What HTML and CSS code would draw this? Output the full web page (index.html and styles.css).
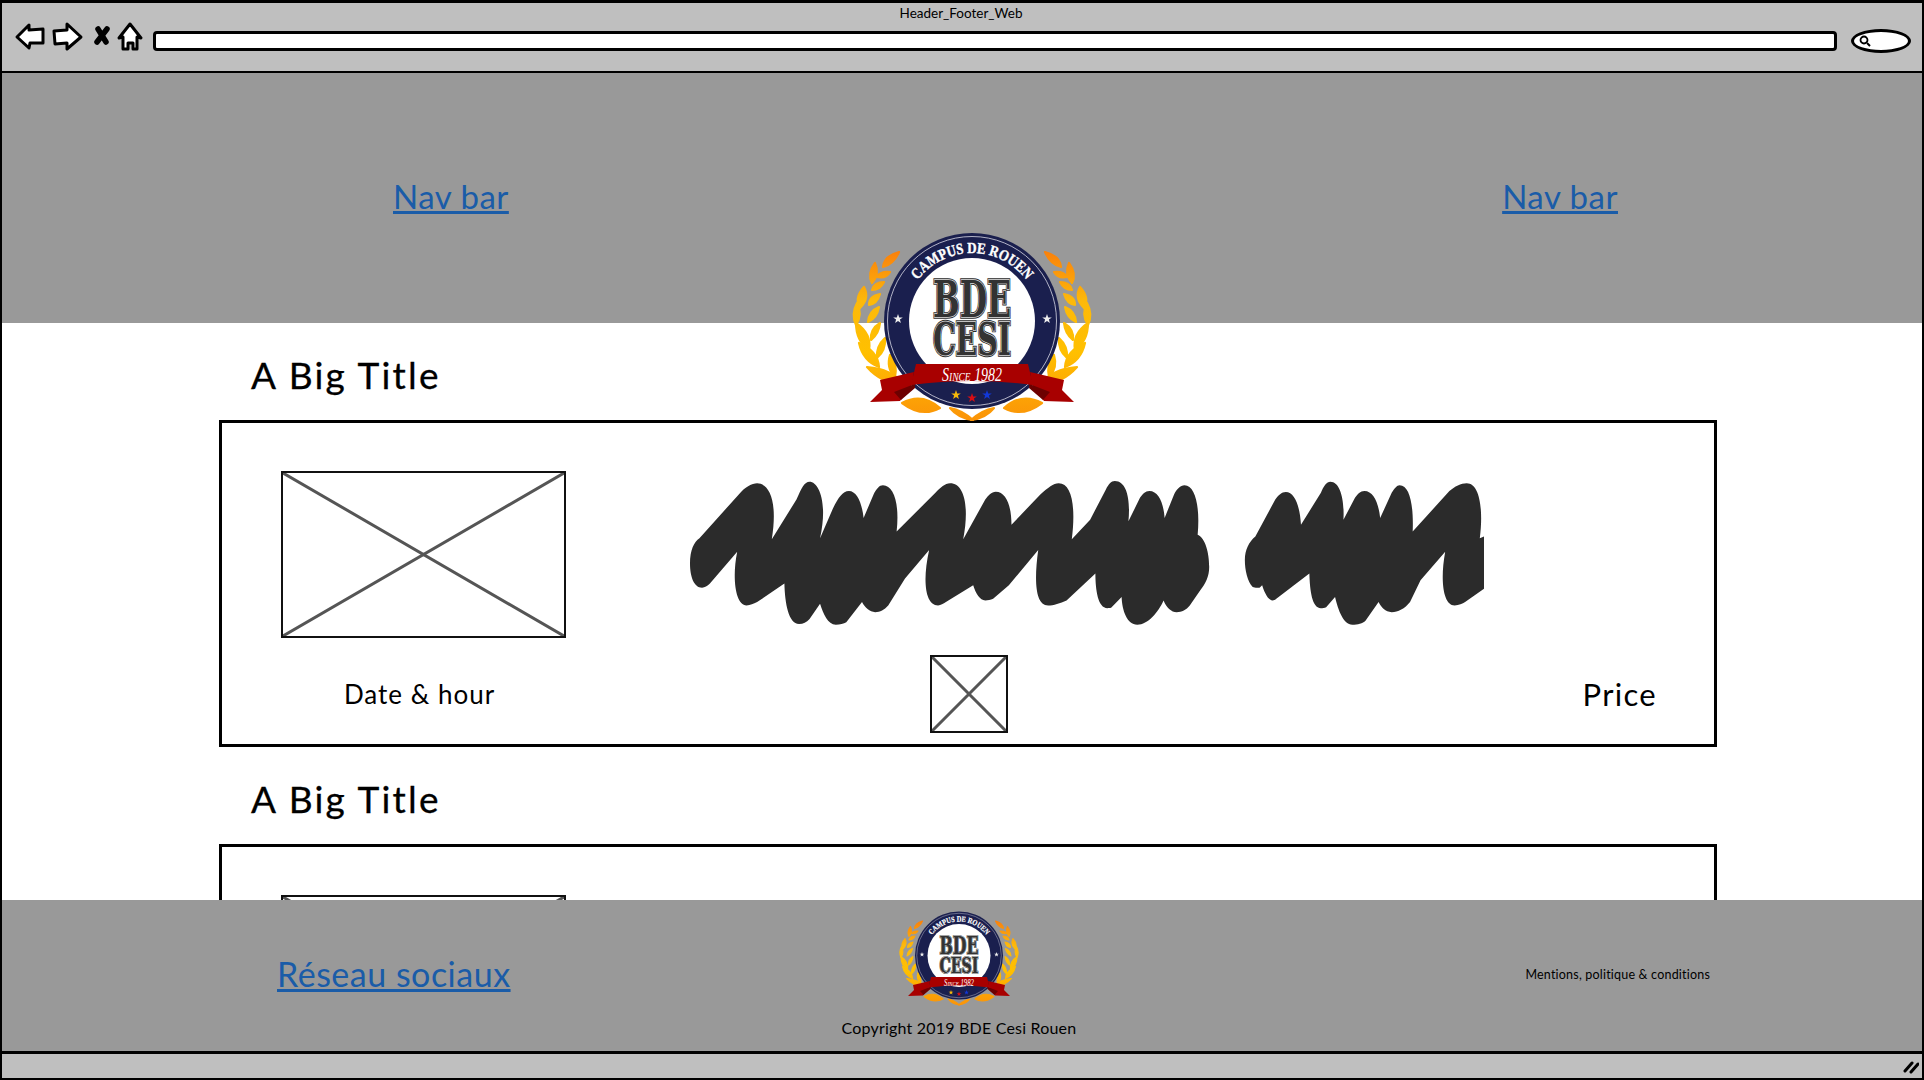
FILE: index.html
```html
<!DOCTYPE html>
<html lang="en">
<head>
<meta charset="UTF-8" />
<title>Header_Footer_Web</title>
<link rel="stylesheet" href="styles.css">
</head>
<body>

<!-- logo, used in header and footer -->
<svg class="defs" aria-hidden="true">
  <defs>
    <linearGradient id="gold" gradientUnits="userSpaceOnUse" x1="0" y1="30" x2="0" y2="200">
      <stop offset="0" stop-color="#f97f0c"/>
      <stop offset=".3" stop-color="#fdb90a"/>
      <stop offset=".6" stop-color="#ffc000"/>
      <stop offset="1" stop-color="#fb9408"/>
    </linearGradient>
    <path id="star" d="M0-5 1.2-1.6H4.8L1.9.6 2.9 4 0 2-2.9 4-1.9.6-4.8-1.6H-1.2Z"/>
    <path id="arc" d="M64 101A68 68 0 0 1 200 101"/>
    <g id="branch" fill="url(#gold)" stroke="url(#gold)" stroke-width="2.200" stroke-linejoin="round" transform="translate(2 0)">
      <path d="M57 32Q42 36 41 47 52 44 57 32Z"/>
      <path d="M33 43Q25 54 30 63 38 54 33 43Z"/>
      <path d="M48 52Q38 51 35 57 44 59 48 52Z"/>
      <path d="M42 62Q32 62 30 70 38 70 42 62Z"/>
      <path d="M22 67Q12 78 18 88 28 78 22 67Z"/>
      <path d="M38 74Q27 76 27 85 35 84 38 74Z"/>
      <path d="M37 87Q27 91 26 102 35 98 37 87Z"/>
      <path d="M15 83Q9 94 14 105 21 94 15 83Z"/>
      <path d="M14 103Q14 121 27 130 30 114 14 103Z"/>
      <path d="M38 103Q28 109 29 120 37 114 38 103Z"/>
      <path d="M43 118Q34 126 35 138 44 130 43 118Z"/>
      <path d="M17 123Q21 141 37 147 36 131 17 123Z"/>
      <path d="M48 135Q44 148 53 157 56 146 48 135Z"/>
      <path d="M25 147Q40 164 60 163 50 149 25 147Z"/>
      <path d="M60 183Q80 172 98 188 80 198 60 183Z"/>
      <path d="M108 188Q120 190 131 200 116 198 108 188Z"/>
    </g>
    <g id="tail">
      <path d="M40 160 74 152 72 165 60 181 30 182 42 170Z" fill="#a80000"/>
      <path d="M74 152 72 165 54 172 61 180 75 168Z" fill="#6d0000"/>
    </g>
    <symbol id="logo" viewBox="0 0 264 210">
      <use href="#branch"/>
      <g transform="matrix(-1 0 0 1 264 0)"><use href="#branch"/></g>
      <circle cx="132" cy="101" r="88" fill="#1a1f4e"/>
      <circle cx="132" cy="101" r="84.500" fill="none" stroke="#d8d8e4" stroke-width=".8"/>
      <circle cx="132" cy="101" r="63" fill="#fff"/>
      <text font-family="'Liberation Serif', serif" font-weight="700" font-size="15.500" fill="#fff" stroke="#fff" stroke-width=".4" text-anchor="middle" textLength="126" lengthAdjust="spacingAndGlyphs"><textPath href="#arc" startOffset="50%">CAMPUS DE ROUEN</textPath></text>
      <g font-family="'DejaVu Serif', serif" font-weight="700" text-anchor="middle">
        <text x="132" y="97" font-size="50" textLength="78" lengthAdjust="spacingAndGlyphs" fill="none" stroke="#2b2b2b" stroke-width="3.400">BDE</text>
        <text x="132" y="97" font-size="50" textLength="78" lengthAdjust="spacingAndGlyphs" fill="none" stroke="#ddd" stroke-width="1.600">BDE</text>
        <text x="132" y="97" font-size="50" textLength="78" lengthAdjust="spacingAndGlyphs" fill="#333">BDE</text>
        <text x="132" y="135" font-size="45" textLength="78" lengthAdjust="spacingAndGlyphs" fill="none" stroke="#2b2b2b" stroke-width="3.400">CESI</text>
        <text x="132" y="135" font-size="45" textLength="78" lengthAdjust="spacingAndGlyphs" fill="none" stroke="#ddd" stroke-width="1.600">CESI</text>
        <text x="132" y="135" font-size="45" textLength="78" lengthAdjust="spacingAndGlyphs" fill="#333">CESI</text>
      </g>
      <use href="#star" transform="translate(58 99)" fill="#eee"/>
      <use href="#star" transform="translate(207 99)" fill="#eee"/>
      <use href="#tail"/>
      <use href="#tail" transform="matrix(-1 0 0 1 264 0)"/>
      <path d="M76 144H188L193 165Q132 157 71 165Z" fill="#a80000"/>
      <text x="132" y="161" font-family="'Liberation Serif', serif" font-style="italic" font-variant="small-caps" font-size="19" fill="#fff" text-anchor="middle" textLength="60" lengthAdjust="spacingAndGlyphs">Since 1982</text>
      <use href="#star" transform="translate(116 175)" fill="#f5b90a"/>
      <use href="#star" transform="translate(132 178)" fill="#d80e14"/>
      <use href="#star" transform="translate(147 175)" fill="#1238d8"/>
    </symbol>
    <symbol id="cross" viewBox="0 0 100 100" preserveAspectRatio="none">
      <path d="M0 0 100 100M100 0 0 100" stroke="#555" stroke-width="3" vector-effect="non-scaling-stroke" fill="none"/>
    </symbol>
    <symbol id="scribble" viewBox="22 35 1514 428" preserveAspectRatio="none">
      <path fill="#2b2b2b" d="M22 280C22 240 30 215 40 205L115 75C128 52 140 42 150 42 172 42 190 90 178 208L225 90C235 55 240 37 250 37 268 37 285 100 270 205L295 115C305 85 313 65 325 65 340 65 350 100 353 145L372 75C378 58 383 48 390 48 410 48 422 100 416 185L490 70C500 55 508 42 518 42 545 42 555 110 543 208L585 90C590 80 597 67 605 67 625 67 635 110 635 165L690 75C705 55 715 42 725 42 750 42 758 110 750 208L785 150 815 60C820 45 825 35 832 35 855 35 862 90 858 155L880 85C885 75 890 65 898 65 915 65 925 100 927 145L945 75C950 60 957 48 965 48 985 48 995 110 990 195 1005 205 1012 250 1012 290 1012 320 1005 340 995 360L975 405C968 418 960 425 950 425 940 425 930 410 925 390 915 425 895 462 875 462 855 462 846 420 845 380L825 412C822 413 820 413 818 413 800 413 795 360 795 310L740 390C728 398 715 405 705 405 680 405 678 330 686 240L630 345 600 385C595 388 590 390 585 390 575 390 567 370 562 345L510 395C505 400 500 405 495 405 470 405 465 330 478 240L432 325 400 405C392 418 385 425 375 425 365 425 355 410 350 395L320 455C315 460 308 462 300 462 285 462 276 430 270 400L250 445C244 455 238 460 230 460 210 460 203 400 202 340L150 395C143 400 137 405 130 405 108 405 102 320 112 245L60 340C55 348 50 352 45 352 30 352 22 320 22 280Z"/>
      <path fill="#2b2b2b" d="M1080 270C1080 240 1088 215 1100 200L1138 90C1144 78 1150 68 1158 68 1175 68 1185 110 1187 165L1225 70C1230 50 1236 37 1243 37 1262 37 1270 90 1268 150L1290 85C1295 75 1300 65 1308 65 1325 65 1335 100 1338 145L1360 70C1365 58 1370 48 1375 48 1395 48 1402 110 1400 185L1470 65C1480 52 1492 42 1503 42 1528 42 1535 120 1528 205L1536 200V355L1500 395C1495 400 1488 405 1480 405 1458 405 1452 330 1462 245L1415 330 1395 395C1385 415 1372 425 1360 425 1348 425 1340 410 1335 395L1310 450C1305 458 1295 462 1285 462 1268 462 1258 420 1252 380L1235 410C1232 412 1228 413 1225 413 1208 413 1204 360 1203 310L1140 385C1138 388 1135 390 1133 390 1125 390 1118 370 1113 345L1108 352C1102 353 1098 352 1095 350 1085 335 1080 300 1080 270Z"/>
    </symbol>
  </defs>
</svg>

<div class="window">

  <div class="chrome">
    <div class="chrome-title">Header_Footer_Web</div>
    <svg class="nav-icons" width="150" height="72" viewBox="0 0 150 72">
      <g fill="#fff" stroke="#000" stroke-width="3" stroke-linejoin="round">
        <path d="M17 37 29 25V30L43 29V43L30 43 29 48Z"/>
        <path d="M54 31 67 30V24L81 37 67 49V43L55 44Z"/>
        <path d="M130 24 119 38 123 37V49H128V43H133V49H137V37L141 38Z"/>
      </g>
      <path d="M98 29 106 42M107 29 97 42" stroke="#000" stroke-width="5.500" stroke-linecap="round"/>
    </svg>
    <div class="url-bar"></div>
    <div class="search-box">
      <svg width="12" height="12" viewBox="0 0 12 12"><circle cx="5" cy="5" r="3.500" fill="none" stroke="#000" stroke-width="1.800"/><path d="M8 8 11 11" stroke="#000" stroke-width="2"/></svg>
    </div>
  </div>

  <div class="page">
    <header class="site-header">
      <a href="#" class="nav-link">Nav bar</a>
      <a href="#" class="nav-link">Nav bar</a>
      <svg class="header-logo"><use href="#logo"/></svg>
    </header>

    <main class="content">
      <h1 class="big-title">A Big Title</h1>
      <section class="card">
        <svg class="placeholder big"><use href="#cross"/></svg>
        <svg class="scribble"><use href="#scribble"/></svg>
        <div class="date">Date &amp; hour</div>
        <svg class="placeholder small"><use href="#cross"/></svg>
        <div class="price">Price</div>
      </section>

      <h1 class="big-title">A Big Title</h1>
      <section class="card">
        <svg class="placeholder big"><use href="#cross"/></svg>
      </section>
    </main>

    <footer class="site-footer">
      <a href="#" class="social-link">Réseau sociaux</a>
      <div class="footer-mid">
        <svg class="footer-logo"><use href="#logo"/></svg>
        <div class="copyright">Copyright 2019 BDE Cesi Rouen</div>
      </div>
      <div class="legal">Mentions, politique &amp; conditions</div>
    </footer>
  </div>

  <div class="status">
    <svg width="16" height="14" viewBox="0 0 16 14"><path d="M2 11 9 3M8 12 15 4" stroke="#000" stroke-width="3" stroke-linecap="round"/></svg>
  </div>
</div>

</body>
</html>
```

FILE: styles.css
```css
* {
  box-sizing: border-box;
}
body {
  margin: 0;
  font-family: Lato, "Open Sans", sans-serif;
  color: #000;
  background: #fff;
}
.defs {
  position: absolute;
  width: 0;
  height: 0;
}
.window {
  height: 100vh;
  display: flex;
  flex-direction: column;
  border: 2px solid #000;
  border-top-width: 3px;
  overflow: hidden;
}

/* browser frame */
.chrome {
  position: relative;
  flex: 0 0 70px;
  min-height: 0;
  display: flex;
  align-items: center;
  background: #bfbfbf;
  border-bottom: 2px solid #000;
  padding-right: 11px;
}
.chrome-title {
  position: absolute;
  top: 2px;
  left: 0;
  right: 2px;
  text-align: center;
  font-size: 13.500px;
  line-height: 16px;
}
.nav-icons {
  flex: none;
  align-self: flex-start;
  margin: -3px 3px -3px -2px;
}
.url-bar {
  flex: 1;
  height: 20px;
  margin-top: 8px;
  margin-right: 14px;
  background: #fff;
  border: 3px solid #000;
  border-radius: 4px;
}
.search-box {
  flex: none;
  display: flex;
  align-items: center;
  width: 60px;
  height: 24px;
  margin-top: 8px;
  padding-left: 5px;
  background: #fff;
  border: 3px solid #000;
  border-radius: 50%;
}

/* page */
.page {
  flex: 1;
  min-height: 0;
  display: flex;
  flex-direction: column;
}
.site-header {
  position: relative;
  flex: 0 0 250px;
  display: flex;
  justify-content: space-between;
  padding: 99px 304px 0 391px;
  background: #999;
}
.nav-link {
  font-size: 33px;
  line-height: 48px;
  letter-spacing: .5px;
  color: #1a5ca8;
}
.header-logo {
  position: absolute;
  left: 838px;
  top: 147px;
  width: 264px;
  height: 210px;
  z-index: 2;
}
.content {
  flex: 1;
  min-height: 0;
  overflow: hidden;
}
.big-title {
  margin: 0 0 0 249px;
  height: 97px;
  padding-top: 26px;
  font-size: 37px;
  line-height: 52px;
  font-weight: 400;
  letter-spacing: 2.200px;
  -webkit-text-stroke: .3px #000;
}
.card {
  display: grid;
  grid-template-columns: 285px 794px 1fr;
  grid-template-rows: 167px 78px;
  column-gap: 0;
  row-gap: 17px;
  width: 1498px;
  height: 327px;
  margin-left: 217px;
  padding: 48px 57px 0 59px;
  border: 3px solid #000;
}
.placeholder {
  display: block;
  border: 2px solid #111;
  background: #fff;
}
.placeholder.big {
  grid-column: 1;
  width: 285px;
  height: 167px;
}
.scribble {
  grid-column: 2 / 4;
  width: 794px;
  height: 144px;
  margin: 10px 0 0 124px;
}
.date {
  grid-column: 1;
  align-self: center;
  text-align: center;
  padding-right: 8px;
  font-size: 26px;
  letter-spacing: 1px;
}
.placeholder.small {
  grid-column: 2;
  width: 78px;
  height: 78px;
  margin-left: 364px;
}
.price {
  grid-column: 3;
  align-self: center;
  justify-self: end;
  font-size: 31px;
  letter-spacing: 1.300px;
}
.site-footer {
  flex: 0 0 151px;
  display: grid;
  grid-template-columns: 837px 240px 1fr;
  background: #999;
}
.social-link {
  align-self: center;
  justify-self: start;
  margin: 0 0 4px 275px;
  font-size: 34px;
  letter-spacing: .5px;
  color: #1a5ca8;
}
.footer-mid {
  display: flex;
  flex-direction: column;
  align-items: center;
  padding-top: 5px;
}
.footer-logo {
  width: 132px;
  height: 105px;
}
.copyright {
  margin-top: 7px;
  font-size: 16px;
  line-height: 22px;
  letter-spacing: .2px;
  white-space: nowrap;
}
.legal {
  align-self: center;
  justify-self: end;
  margin: 0 212px 2px 0;
  font-size: 12.500px;
  letter-spacing: .2px;
}
.status {
  flex: 0 0 27px;
  display: flex;
  align-items: center;
  justify-content: flex-end;
  padding-right: 3px;
  background: #bfbfbf;
  border-top: 3px solid #000;
}
.status svg {
  margin-top: 2px;
}
```
